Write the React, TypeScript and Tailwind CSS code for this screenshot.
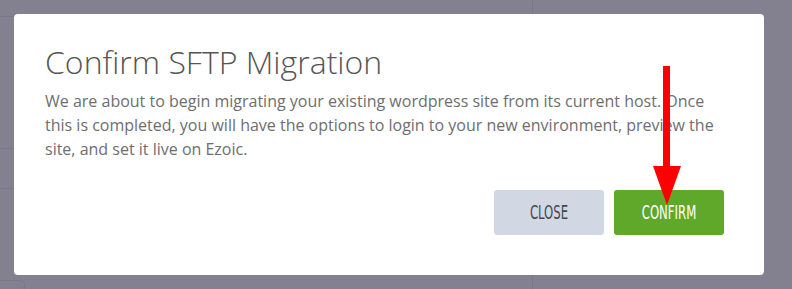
import React from "react";

export default function App() {
  return (
    <div className="relative w-[792px] h-[289px] overflow-hidden bg-[#83818f] font-['Open_Sans',sans-serif]">
      {/* faint page behind the overlay */}
      <div className="absolute left-0 top-[16px] w-[14px] border-t border-[#797788]" />
      <div className="absolute left-0 top-[148px] w-[14px] border-t border-[#797788]" />
      <div className="absolute left-0 top-[188px] w-[14px] border-t border-[#797788]" />
      <div className="absolute left-[-4px] top-[280px] w-[29px] h-[20px] rounded-[4px] border border-[#797788]" />
      <div className="absolute left-[532px] top-0 h-[289px] border-l border-[#797788]" />

      <div className="relative p-[14px]">
        <div className="w-[750px] h-[261px] bg-white rounded-[4px] pt-[29px] pl-[31px] pr-[40px] pb-[40px] flex flex-col">
          <h1 className="text-[32px] leading-[37px] text-[#555555] font-light">Confirm SFTP Migration</h1>
          <p className="mt-[9px] text-[16px] leading-[24px] text-[#6e6e6e] w-[690px]">
            We are about to begin migrating your existing wordpress site from its current host. Once this is completed, you will have the options to login to your new environment, preview the site, and set it live on Ezoic.
          </p>
          <div className="mt-auto flex justify-end gap-[10px]">
            <button className="w-[110px] h-[45px] rounded-[3px] bg-[#d1d8e4] text-[#434753] font-['Liberation_Sans_Narrow','DejaVu_Sans_Condensed',sans-serif] text-[13px]">
              <span className="inline-block scale-y-[1.5]">CLOSE</span>
            </button>
            <button className="w-[110px] h-[45px] rounded-[3px] bg-[#5fa829] text-white font-['Liberation_Sans_Narrow','DejaVu_Sans_Condensed',sans-serif] text-[13px]">
              <span className="inline-block scale-y-[1.5]">CONFIRM</span>
            </button>
          </div>
        </div>
      </div>

      {/* red annotation arrow */}
      <svg className="absolute left-0 top-0" width="792" height="289" viewBox="0 0 792 289">
        <rect x="663" y="66" width="7" height="101" fill="#ff0000" />
        <polygon points="653,166 681,166 667,205" fill="#ff0000" />
      </svg>
    </div>
  );
}
